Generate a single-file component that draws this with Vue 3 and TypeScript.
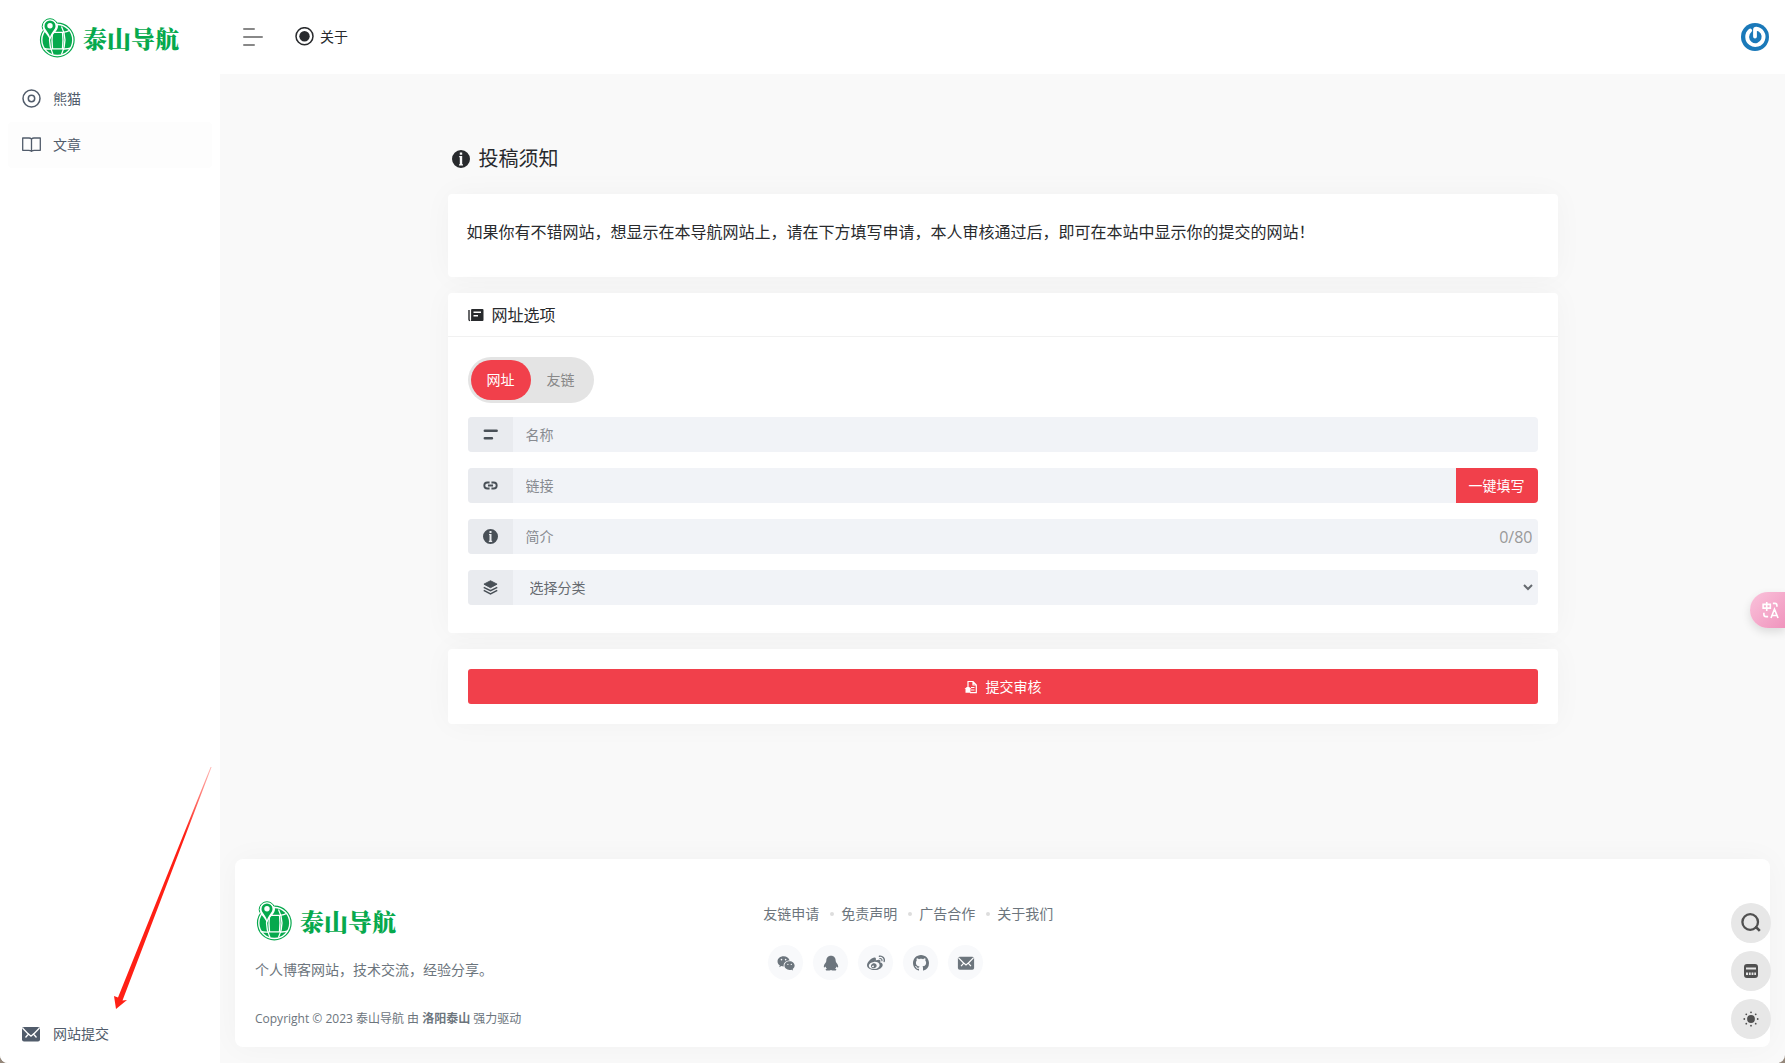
<script setup lang="ts">
import { ref } from 'vue'

interface Row {
  id: string
  icon: string
  placeholder: string
}

const tabs = ['网址', '友链']
const activeTab = ref(0)
const form = ref<Record<string, string>>({ name: '', link: '', intro: '' })
const category = ref('')
const rows: Row[] = [
  { id: 'name', icon: 'i-lines', placeholder: '名称' },
  { id: 'link', icon: 'i-link', placeholder: '链接' },
  { id: 'intro', icon: 'i-info', placeholder: '简介' },
]
const footerLinks = ['友链申请', '免责声明', '广告合作', '关于我们']
const socials = [
  { icon: 'i-wechat', label: '微信' },
  { icon: 'i-qq', label: 'QQ' },
  { icon: 'i-weibo', label: '微博' },
  { icon: 'i-github', label: 'GitHub' },
  { icon: 'i-mail', label: '邮箱' },
]
const tools = [
  { icon: 'i-search', label: '搜索', size: 'large' },
  { icon: 'i-calc', label: '小工具', size: 'small' },
  { icon: 'i-sun', label: '切换主题', size: 'small' },
]
</script>

<template>
  <div class="page">
    <svg class="sprite" aria-hidden="true">
      <symbol id="i-logo" viewBox="0 0 36 40">
        <circle cx="18.300" cy="22" r="16.800" fill="#fff" stroke="#06a94d" stroke-width="1.200" />
        <circle cx="18.300" cy="22" r="14.800" fill="#06a94d" />
        <g fill="none" stroke="#fff" stroke-width="1.300">
          <path d="M14 8.500q-7 13.500 0 28M22.500 8.500q7 13.500 0 28" />
          <path d="M13 14.300h11q4-.2 7-2M4.500 30.500q5 1 9 .4h10q5 .4 8.500-1M13.500 14.500q-1 8 0 16M23.500 14.500q1 8 0 16" />
        </g>
        <path d="M11 0a8 8 0 0 0-8 8c0 4.800 5 7 8 13.700C14 15 19 12.800 19 8a8 8 0 0 0-8-8z" fill="#fff" />
        <path d="M3.800 11.500a7.600 7.600 0 1 1 14.400-6" fill="none" stroke="#06a94d" stroke-width="1" />
        <path d="M11 2.500A5.500 5.500 0 0 0 5.500 8c0 3.500 3.700 5.500 5.500 11 1.800-5.500 5.500-7.500 5.500-11A5.500 5.500 0 0 0 11 2.500z" fill="#06a94d" />
        <circle cx="11" cy="7.700" r="2.700" fill="#fff" />
      </symbol>
      <symbol id="i-target" viewBox="0 0 20 20">
        <g fill="none" stroke="currentColor" stroke-width="1.500">
          <circle cx="10.500" cy="9.500" r="8.500" /><circle cx="10.500" cy="9.500" r="3.200" />
        </g>
      </symbol>
      <symbol id="i-book" viewBox="0 0 20 20">
        <path d="M10.500 4Q9.500 3 8 3H1.700v12.300h6Q9.500 15.300 10.500 16.300q1-1 2.800-1h6V3H13Q11.500 3 10.500 4zM10.500 4V16" fill="none" stroke="currentColor" stroke-width="1.300" stroke-linejoin="round" />
      </symbol>
      <symbol id="i-mail" viewBox="0 0 20 20">
        <path d="M3 3h14a2 2 0 0 1 2 2v10.500a2 2 0 0 1-2 2H3a2 2 0 0 1-2-2V5a2 2 0 0 1 2-2z" fill="currentColor" />
        <path d="M1.500 4l5.800 6M18.500 4l-5.800 6M4.500 13.500L7.500 10l2.500 2.200 2.500-2.200 3 3.500" fill="none" stroke="#fff" stroke-width="1.300" />
      </symbol>
      <symbol id="i-radio" viewBox="0 0 20 20">
        <circle cx="10.500" cy="9.200" r="8.500" fill="none" stroke="currentColor" stroke-width="1.500" />
        <circle cx="10.500" cy="9.200" r="5.200" fill="currentColor" />
      </symbol>
      <symbol id="i-info" viewBox="0 0 18 18">
        <path fill-rule="evenodd" fill="currentColor" d="M9 0a9 9 0 1 0 0 18A9 9 0 0 0 9 0zM7.800 2.500h2.400v2.200H7.800zM7.200 6h3v8.200h.8v1.300H7v-1.300h.8V7.300h-.6z" />
      </symbol>
      <symbol id="i-news" viewBox="0 0 16 16">
        <path d="M1 3v9.500q0 1 1 1" fill="none" stroke="currentColor" stroke-width="1.400" />
        <path fill-rule="evenodd" fill="currentColor" d="M4 2h10.500q1 0 1 1v10q0 1-1 1H2.500q.6-.4.600-1.200V3q0-1 .9-1zM5.500 4.500V6h7.500V4.500zM5.500 8v1.500h4.500V8z" />
      </symbol>
      <symbol id="i-lines" viewBox="0 0 16 16">
        <path d="M2 4h12.500M2 12h7.500" stroke="currentColor" stroke-width="2.800" stroke-linecap="round" />
      </symbol>
      <symbol id="i-link" viewBox="0 0 16 16">
        <path d="M7 4.800H4.600a3.200 3.200 0 0 0 0 6.400H7M9 4.800h2.400a3.200 3.200 0 0 1 0 6.400H9M5.300 8h5.400" fill="none" stroke="currentColor" stroke-width="2" />
      </symbol>
      <symbol id="i-layers" viewBox="0 0 16 16">
        <path d="M8 .8l7 3.600-7 3.800L1 4.400z" fill="currentColor" stroke="currentColor" stroke-linejoin="round" />
        <path d="M.8 7.800L8 11.500l7.200-3.700M.8 11L8 14.800 15.200 11" fill="none" stroke="currentColor" stroke-width="1.600" />
      </symbol>
      <symbol id="i-submit" viewBox="0 0 14 14">
        <path d="M4 6V1.500h5L12.300 5v7.700H6M9 1.500V5h3M7 7.500h3.500M7 10h3.500" fill="none" stroke="currentColor" stroke-width="1.200" />
        <path d="M4 6L7.500 9H6.500v3.700H1.500V9H.5z" fill="currentColor" />
      </symbol>
      <symbol id="i-wechat" viewBox="0 0 20 20">
        <path fill-rule="evenodd" fill="currentColor" d="M7.300 2.500C3.500 2.500.6 5 .6 8.200c0 1.800 1 3.300 2.500 4.400l-.6 2 2.300-1.200c.9.300 1.700.4 2.700.4-.7-3.700 2.400-6.500 6.500-6.500-.7-2.800-3.300-4.800-6.700-4.800zM5 5.400a.9.900 0 1 1 0 1.800.9.900 0 0 1 0-1.800zM9.600 5.400a.9.900 0 1 1 0 1.800.9.900 0 0 1 0-1.800z" />
        <path fill-rule="evenodd" fill="currentColor" d="M14 8c-3.200 0-5.700 2.200-5.700 4.900s2.500 4.800 5.700 4.800c.7 0 1.400-.1 2-.3l1.900 1-.5-1.700c1.300-.9 2.200-2.300 2.200-3.800C19.600 10.200 17.100 8 14 8zM12.100 10.700a.8.800 0 1 1 0 1.600.8.800 0 0 1 0-1.600zM15.900 10.700a.8.800 0 1 1 0 1.600.8.800 0 0 1 0-1.600z" />
      </symbol>
      <symbol id="i-qq" viewBox="0 0 20 20">
        <path fill="currentColor" d="M10 2C6.600 2 4.800 4.500 4.800 7.500l-.3 1.300C3.200 10.500 2 12.400 2 14c0 1.500.7 1.500 1.900-.1.300 1 .8 1.700 1.500 2.400-1 .3-1.400.8-1.400 1.200 0 1.200 4.300 1.200 6 .2 1.700 1 6 1 6-.2 0-.4-.4-.9-1.400-1.200.7-.7 1.200-1.400 1.500-2.400 1.200 1.600 1.900 1.600 1.900.1 0-1.600-1.200-3.500-2.500-5.200l-.3-1.300C15.200 4.500 13.400 2 10 2z" />
      </symbol>
      <symbol id="i-weibo" viewBox="1 1 22 22">
        <path fill="currentColor" d="M17.525 11.378c1.263.392 2.669 1.336 2.669 3.004 0 2.763-3.980 6.239-9.964 6.239-4.565 0-9.230-2.213-9.230-5.852 0-1.902 1.204-4.102 3.277-6.177 2.773-2.770 6.004-4.033 7.219-2.816.537.537.588 1.464.244 2.572-.178.557.525.250.525.250 2.240-.938 4.196-.994 4.909.027.380.543.343 1.306-.008 2.190-.163.407.048.471.360.563zm-7.282 7.939c3.641-.362 6.401-2.592 6.167-4.983-.237-2.391-3.382-4.038-7.023-3.677-3.640.360-6.403 2.590-6.167 4.980.237 2.394 3.382 4.039 7.023 3.680zM6.160 14.438c.754-1.527 2.712-2.390 4.446-1.940 1.793.463 2.707 2.154 1.976 3.800-.744 1.682-2.882 2.578-4.695 1.993-1.752-.566-2.493-2.294-1.727-3.853zm1.446 2.587c.568.257 1.325.013 1.676-.550.346-.568.163-1.217-.407-1.459-.563-.237-1.291.008-1.640.553-.354.547-.189 1.202.371 1.456zM19.873 9.500a.725.725 0 1 1-1.378-.451 1.380 1.380 0 0 0-.288-1.357 1.395 1.395 0 0 0-1.321-.425.723.723 0 1 1-.303-1.416 2.836 2.836 0 0 1 3.290 3.649zm-3.916-6.575A5.831 5.831 0 0 1 21.500 4.720a5.836 5.836 0 0 1 1.220 5.704.838.838 0 0 1-1.060.540.844.844 0 0 1-.542-1.062 4.143 4.143 0 0 0-4.807-5.327.845.845 0 0 1-.354-1.650z" />
      </symbol>
      <symbol id="i-github" viewBox="-1 -1 18 18">
        <path fill="currentColor" d="M8 0C3.580 0 0 3.580 0 8c0 3.540 2.290 6.530 5.470 7.590.400.070.550-.170.550-.380 0-.190-.010-.820-.010-1.490-2.010.370-2.530-.490-2.690-.940-.090-.230-.480-.940-.820-1.130-.280-.150-.680-.520-.010-.530.630-.010 1.080.580 1.230.820.720 1.210 1.870.870 2.330.660.070-.520.280-.870.510-1.070-1.780-.200-3.640-.890-3.640-3.950 0-.870.310-1.590.820-2.150-.080-.200-.360-1.020.080-2.120 0 0 .670-.210 2.200.820.640-.180 1.320-.270 2-.270s1.360.090 2 .270c1.530-1.040 2.200-.820 2.200-.820.440 1.100.160 1.920.080 2.120.510.560.820 1.270.820 2.150 0 3.070-1.870 3.750-3.650 3.950.290.250.540.730.540 1.480 0 1.070-.010 1.930-.010 2.200 0 .210.150.460.550.380A8.010 8.010 0 0 0 16 8c0-4.420-3.580-8-8-8z" />
      </symbol>
      <symbol id="i-search" viewBox="0 0 20 20">
        <circle cx="9.200" cy="9" r="7.800" fill="none" stroke="currentColor" stroke-width="2.300" />
        <path d="M14 14.500h1.500l3.300 3.300" fill="none" stroke="currentColor" stroke-width="2.600" />
      </symbol>
      <symbol id="i-calc" viewBox="0 0 16 16">
        <path fill-rule="evenodd" fill="currentColor" d="M4 1h8a3 3 0 0 1 3 3v8a3 3 0 0 1-3 3H4a3 3 0 0 1-3-3V4a3 3 0 0 1 3-3zM3 4.500v2h10v-2zM3 9.500V12h2V9.500zM5.900 9.500V12h1.800V9.500zM8.600 9.500V12h1.800V9.500zM11.300 9.500V12H13V9.500z" />
      </symbol>
      <symbol id="i-sun" viewBox="0 0 16 16">
        <circle cx="8" cy="8" r="3.900" fill="currentColor" />
        <g fill="currentColor">
          <circle cx="8" cy="1.300" r=".9" /><circle cx="8" cy="14.700" r=".9" />
          <circle cx="1.300" cy="8" r=".9" /><circle cx="14.700" cy="8" r=".9" />
          <circle cx="3.300" cy="3.300" r=".9" /><circle cx="12.700" cy="3.300" r=".9" />
          <circle cx="3.300" cy="12.700" r=".9" /><circle cx="12.700" cy="12.700" r=".9" />
        </g>
      </symbol>
    </svg>

    <aside class="sidebar">
      <a class="logo" href="#"><svg class="logo-mark"><use href="#i-logo" /></svg>泰山导航</a>
      <nav class="side-nav">
        <a class="side-item" href="#"><svg class="icon20"><use href="#i-target" /></svg>熊猫</a>
        <a class="side-item active" href="#"><svg class="icon20"><use href="#i-book" /></svg>文章</a>
      </nav>
      <a class="side-item bottom" href="#"><svg class="icon20"><use href="#i-mail" /></svg>网站提交</a>
      <svg class="pointer" viewBox="0 0 100 242" aria-hidden="true">
        <defs>
          <linearGradient id="fade" x1="1" y1="0" x2=".7" y2=".25">
            <stop offset="0" stop-color="#ff2015" stop-opacity=".3" />
            <stop offset="1" stop-color="#ff2015" />
          </linearGradient>
        </defs>
        <path fill="url(#fade)" d="M98.600 0L6 230.500 2 229 4 242 15 233l-4.500.500L99.600 0z" />
      </svg>
    </aside>

    <div class="body">
      <header class="topbar">
        <button class="burger" type="button" aria-label="菜单">
          <svg viewBox="0 0 22 22"><path d="M2 3h10M2 11h18M2 19h10" stroke="#888" stroke-width="2" stroke-linecap="round" /></svg>
        </button>
        <a class="about" href="#"><svg class="icon20"><use href="#i-radio" /></svg>关于</a>
        <a class="avatar" href="#" aria-label="用户">
          <svg viewBox="0 0 28 28">
            <circle cx="14" cy="14" r="14" fill="#1a79b9" />
            <path d="M9.200 7.500a8.200 8.200 0 1 0 6-1.800q-1.200 0-1.200 1.300v6.500" fill="none" stroke="#fff" stroke-width="3.800" stroke-linecap="round" />
          </svg>
        </a>
      </header>

      <main class="content">
        <h1 class="title"><svg class="icon18"><use href="#i-info" /></svg>投稿须知</h1>
        <section class="card notice">
          <p>如果你有不错网站，想显示在本导航网站上，请在下方填写申请，本人审核通过后，即可在本站中显示你的提交的网站！</p>
        </section>

        <form class="form" @submit.prevent>
          <section class="card">
            <h2 class="card-head"><svg class="icon16"><use href="#i-news" /></svg>网址选项</h2>
            <div class="card-body">
              <div class="tabs">
                <button
                  v-for="(tab, i) in tabs"
                  :key="tab"
                  type="button"
                  class="tab"
                  :class="{ on: activeTab === i }"
                  @click="activeTab = i"
                >{{ tab }}</button>
              </div>
              <div v-for="row in rows" :key="row.id" class="field">
                <label class="addon" :for="row.id" :aria-label="row.placeholder">
                  <svg class="glyph"><use :href="'#' + row.icon" /></svg>
                </label>
                <input :id="row.id" v-model="form[row.id]" class="control" type="text" :placeholder="row.placeholder" />
                <button v-if="row.id === 'link'" class="fill" type="button">一键填写</button>
                <span v-if="row.id === 'intro'" class="count">{{ form.intro.length }}/80</span>
              </div>
              <div class="field">
                <label class="addon" for="category" aria-label="分类">
                  <svg class="glyph"><use href="#i-layers" /></svg>
                </label>
                <select id="category" v-model="category" class="control select">
                  <option value="">选择分类</option>
                </select>
              </div>
            </div>
          </section>
          <section class="card submit-card">
            <button class="submit" type="submit"><svg class="icon14"><use href="#i-submit" /></svg>提交审核</button>
          </section>
        </form>
      </main>

      <footer class="footer">
        <div class="footer-about">
          <a class="logo" href="#"><svg class="logo-mark"><use href="#i-logo" /></svg>泰山导航</a>
          <p class="desc">个人博客网站，技术交流，经验分享。</p>
          <p class="copy">Copyright © 2023 泰山导航 由 <strong>洛阳泰山</strong> 强力驱动</p>
        </div>
        <div class="footer-nav">
          <ul class="links">
            <li v-for="link in footerLinks" :key="link"><a href="#">{{ link }}</a></li>
          </ul>
          <div class="socials">
            <a v-for="s in socials" :key="s.icon" class="social" href="#" :aria-label="s.label">
              <svg><use :href="'#' + s.icon" /></svg>
            </a>
          </div>
        </div>
      </footer>
    </div>

    <button class="translate" type="button" aria-label="翻译">
      <svg viewBox="0 0 18 18" fill="none" stroke="#fff" stroke-width="1.700">
        <path d="M1.200 2.500h7.600v4H1.200zM5 0v9.500M11.500 1.500h2.300q2 0 2 2.300V5M2 11.500v1.800q0 2.200 2.200 2.200h2.300M9.500 17l3.700-9.500L17 17M10.800 14.300h4.900" />
      </svg>
    </button>
    <div class="tools">
      <button v-for="t in tools" :key="t.icon" class="tool" type="button" :aria-label="t.label">
        <svg :class="t.size"><use :href="'#' + t.icon" /></svg>
      </button>
    </div>
  </div>
</template>

<style>
html {
  background: #94877a;
}
body {
  margin: 0;
}
</style>

<style scoped>
* {
  box-sizing: border-box;
}
.page {
  display: flex;
  min-height: 100vh;
  overflow: hidden;
  border-radius: 0 0 8px 8px;
  background: #f9f9f9;
  color: #282a2d;
  font: 14px/20px "Open Sans", "Noto Sans CJK SC", sans-serif;
}
a {
  color: inherit;
  text-decoration: none;
}
button,
input,
select {
  margin: 0;
  border: 0;
  font: inherit;
}
button {
  padding: 0;
  cursor: pointer;
}
h1,
h2,
p,
ul {
  margin: 0;
  padding: 0;
  font-weight: 400;
}
svg {
  display: block;
  flex: none;
}
.sprite {
  position: absolute;
  width: 0;
  height: 0;
}
.icon20 {
  width: 20px;
  height: 20px;
}
.icon18 {
  width: 18px;
  height: 18px;
}
.icon16 {
  width: 16px;
  height: 16px;
}
.icon14 {
  width: 14px;
  height: 14px;
}

.sidebar {
  position: relative;
  display: flex;
  flex: none;
  flex-direction: column;
  width: 220px;
  padding: 0 8px 6px;
  background: #fff;
  color: #515c6b;
}
.logo {
  display: flex;
  align-items: center;
  gap: 8px;
  color: #06a94d;
  font-family: "Noto Serif CJK SC", "Noto Sans CJK SC", serif;
  font-size: 24px;
  font-weight: 900;
  line-height: 40px;
}
.logo-mark {
  width: 36px;
  height: 40px;
}
.sidebar .logo {
  height: 76px;
  padding-left: 31px;
}
.footer .logo {
  padding-left: 1px;
}
.side-nav {
  flex: 1;
}
.side-item {
  display: flex;
  align-items: center;
  gap: 12px;
  height: 46px;
  padding-left: 13px;
  border-radius: 4px;
}
.side-item.active {
  background: #fdfdfd;
}
.pointer {
  position: absolute;
  left: 112px;
  bottom: 54px;
  width: 100px;
  height: 242px;
  pointer-events: none;
}

.body {
  display: flex;
  flex: 1;
  flex-direction: column;
  min-width: 0;
}
.topbar {
  display: flex;
  align-items: center;
  height: 74px;
  padding: 0 16px 0 22px;
  background: #fff;
}
.burger {
  width: 22px;
  background: none;
}
.about {
  display: flex;
  align-items: center;
  gap: 6px;
  margin-left: 30px;
}
.avatar {
  width: 28px;
  margin-left: auto;
}

.content {
  flex: 1;
  width: 100%;
  max-width: 1110px;
  margin: 0 auto;
  padding: 70px 0 40px;
}
.title {
  display: flex;
  align-items: center;
  gap: 9px;
  margin-bottom: 20px;
  padding-left: 4px;
  font-size: 20px;
  line-height: 30px;
}
.card {
  margin-bottom: 16px;
  border-radius: 4px;
  background: #fff;
  box-shadow: 0 0 30px rgba(0, 0, 0, 0.035);
}
.notice {
  padding: 26px 19px 33px;
  font-size: 16px;
  line-height: 24px;
}
.card-head {
  display: flex;
  align-items: center;
  gap: 8px;
  height: 44px;
  padding: 0 20px;
  border-bottom: 1px solid #f1f1f1;
  font-size: 16px;
}
.card-body {
  display: flex;
  flex-direction: column;
  gap: 16px;
  padding: 20px 20px 28px;
}
.tabs {
  align-self: flex-start;
  margin-bottom: -2px;
  padding: 3px;
  border-radius: 23px;
  background: #e4e4e4;
}
.tab {
  width: 60px;
  height: 40px;
  border-radius: 20px;
  background: none;
  color: #888;
}
.tab.on {
  background: #f1404b;
  color: #fff;
}
.field {
  position: relative;
  display: flex;
  height: 35px;
  overflow: hidden;
  border-radius: 4px;
  background: #f1f3f7;
}
.addon {
  display: flex;
  flex: none;
  align-items: center;
  justify-content: center;
  width: 45px;
  background: #e9ebef;
  color: #495057;
}
.glyph {
  width: 15px;
  height: 15px;
}
.control {
  flex: 1;
  min-width: 0;
  padding: 0 13px;
  outline: 0;
  background: transparent;
  color: #666a70;
}
.control::placeholder {
  color: #888b91;
  opacity: 1;
}
.select {
  margin-right: 2px;
}
.fill {
  width: 82px;
  background: #f1404b;
  color: #fff;
}
.count {
  position: absolute;
  right: 5px;
  line-height: 36px;
  color: #999;
  font-size: 16px;
}
.submit-card {
  padding: 20px;
}
.submit {
  display: flex;
  align-items: center;
  justify-content: center;
  gap: 8px;
  width: 100%;
  height: 35px;
  border-radius: 3px;
  background: #f1404b;
  color: #fff;
}

.footer {
  display: flex;
  margin: 0 15px 16px;
  padding: 42px 20px 19px;
  border-radius: 8px;
  background: #fff;
  box-shadow: 0 0 30px rgba(0, 0, 0, 0.035);
  color: #6c757d;
}
.footer-about {
  flex: 0 0 34%;
}
.desc {
  margin: 19px 0 29px;
}
.copy {
  height: 19px;
  font-size: 12px;
}
.links {
  display: flex;
  gap: 22px;
  margin-top: 3px;
  list-style: none;
}
.links li {
  position: relative;
}
.links li + li::before {
  position: absolute;
  top: 8px;
  left: -11px;
  width: 4px;
  height: 4px;
  border-radius: 50%;
  background: #ddd;
  content: "";
}
.socials {
  display: flex;
  gap: 10px;
  margin: 21px 0 0 5px;
}
.social {
  display: flex;
  align-items: center;
  justify-content: center;
  width: 35px;
  height: 35px;
  border-radius: 50%;
  background: #f8f9fb;
}
.social svg {
  width: 18px;
  height: 18px;
}

.tools {
  position: fixed;
  right: 14px;
  bottom: 24px;
  display: flex;
  flex-direction: column;
  gap: 8px;
}
.tool {
  display: flex;
  align-items: center;
  justify-content: center;
  width: 40px;
  height: 40px;
  border-radius: 50%;
  background: #e7e7e7;
  color: #505050;
}
.large {
  width: 20px;
  height: 20px;
}
.small {
  width: 16px;
  height: 16px;
}
.translate {
  position: fixed;
  top: 592px;
  right: 0;
  display: flex;
  align-items: center;
  width: 35px;
  height: 36px;
  padding-left: 12px;
  border-radius: 18px 0 0 18px;
  background: linear-gradient(135deg, #fac3db, #f094bd);
  box-shadow: 0 4px 10px rgba(0, 0, 0, 0.12);
}
.translate svg {
  width: 17px;
  height: 17px;
}
</style>
